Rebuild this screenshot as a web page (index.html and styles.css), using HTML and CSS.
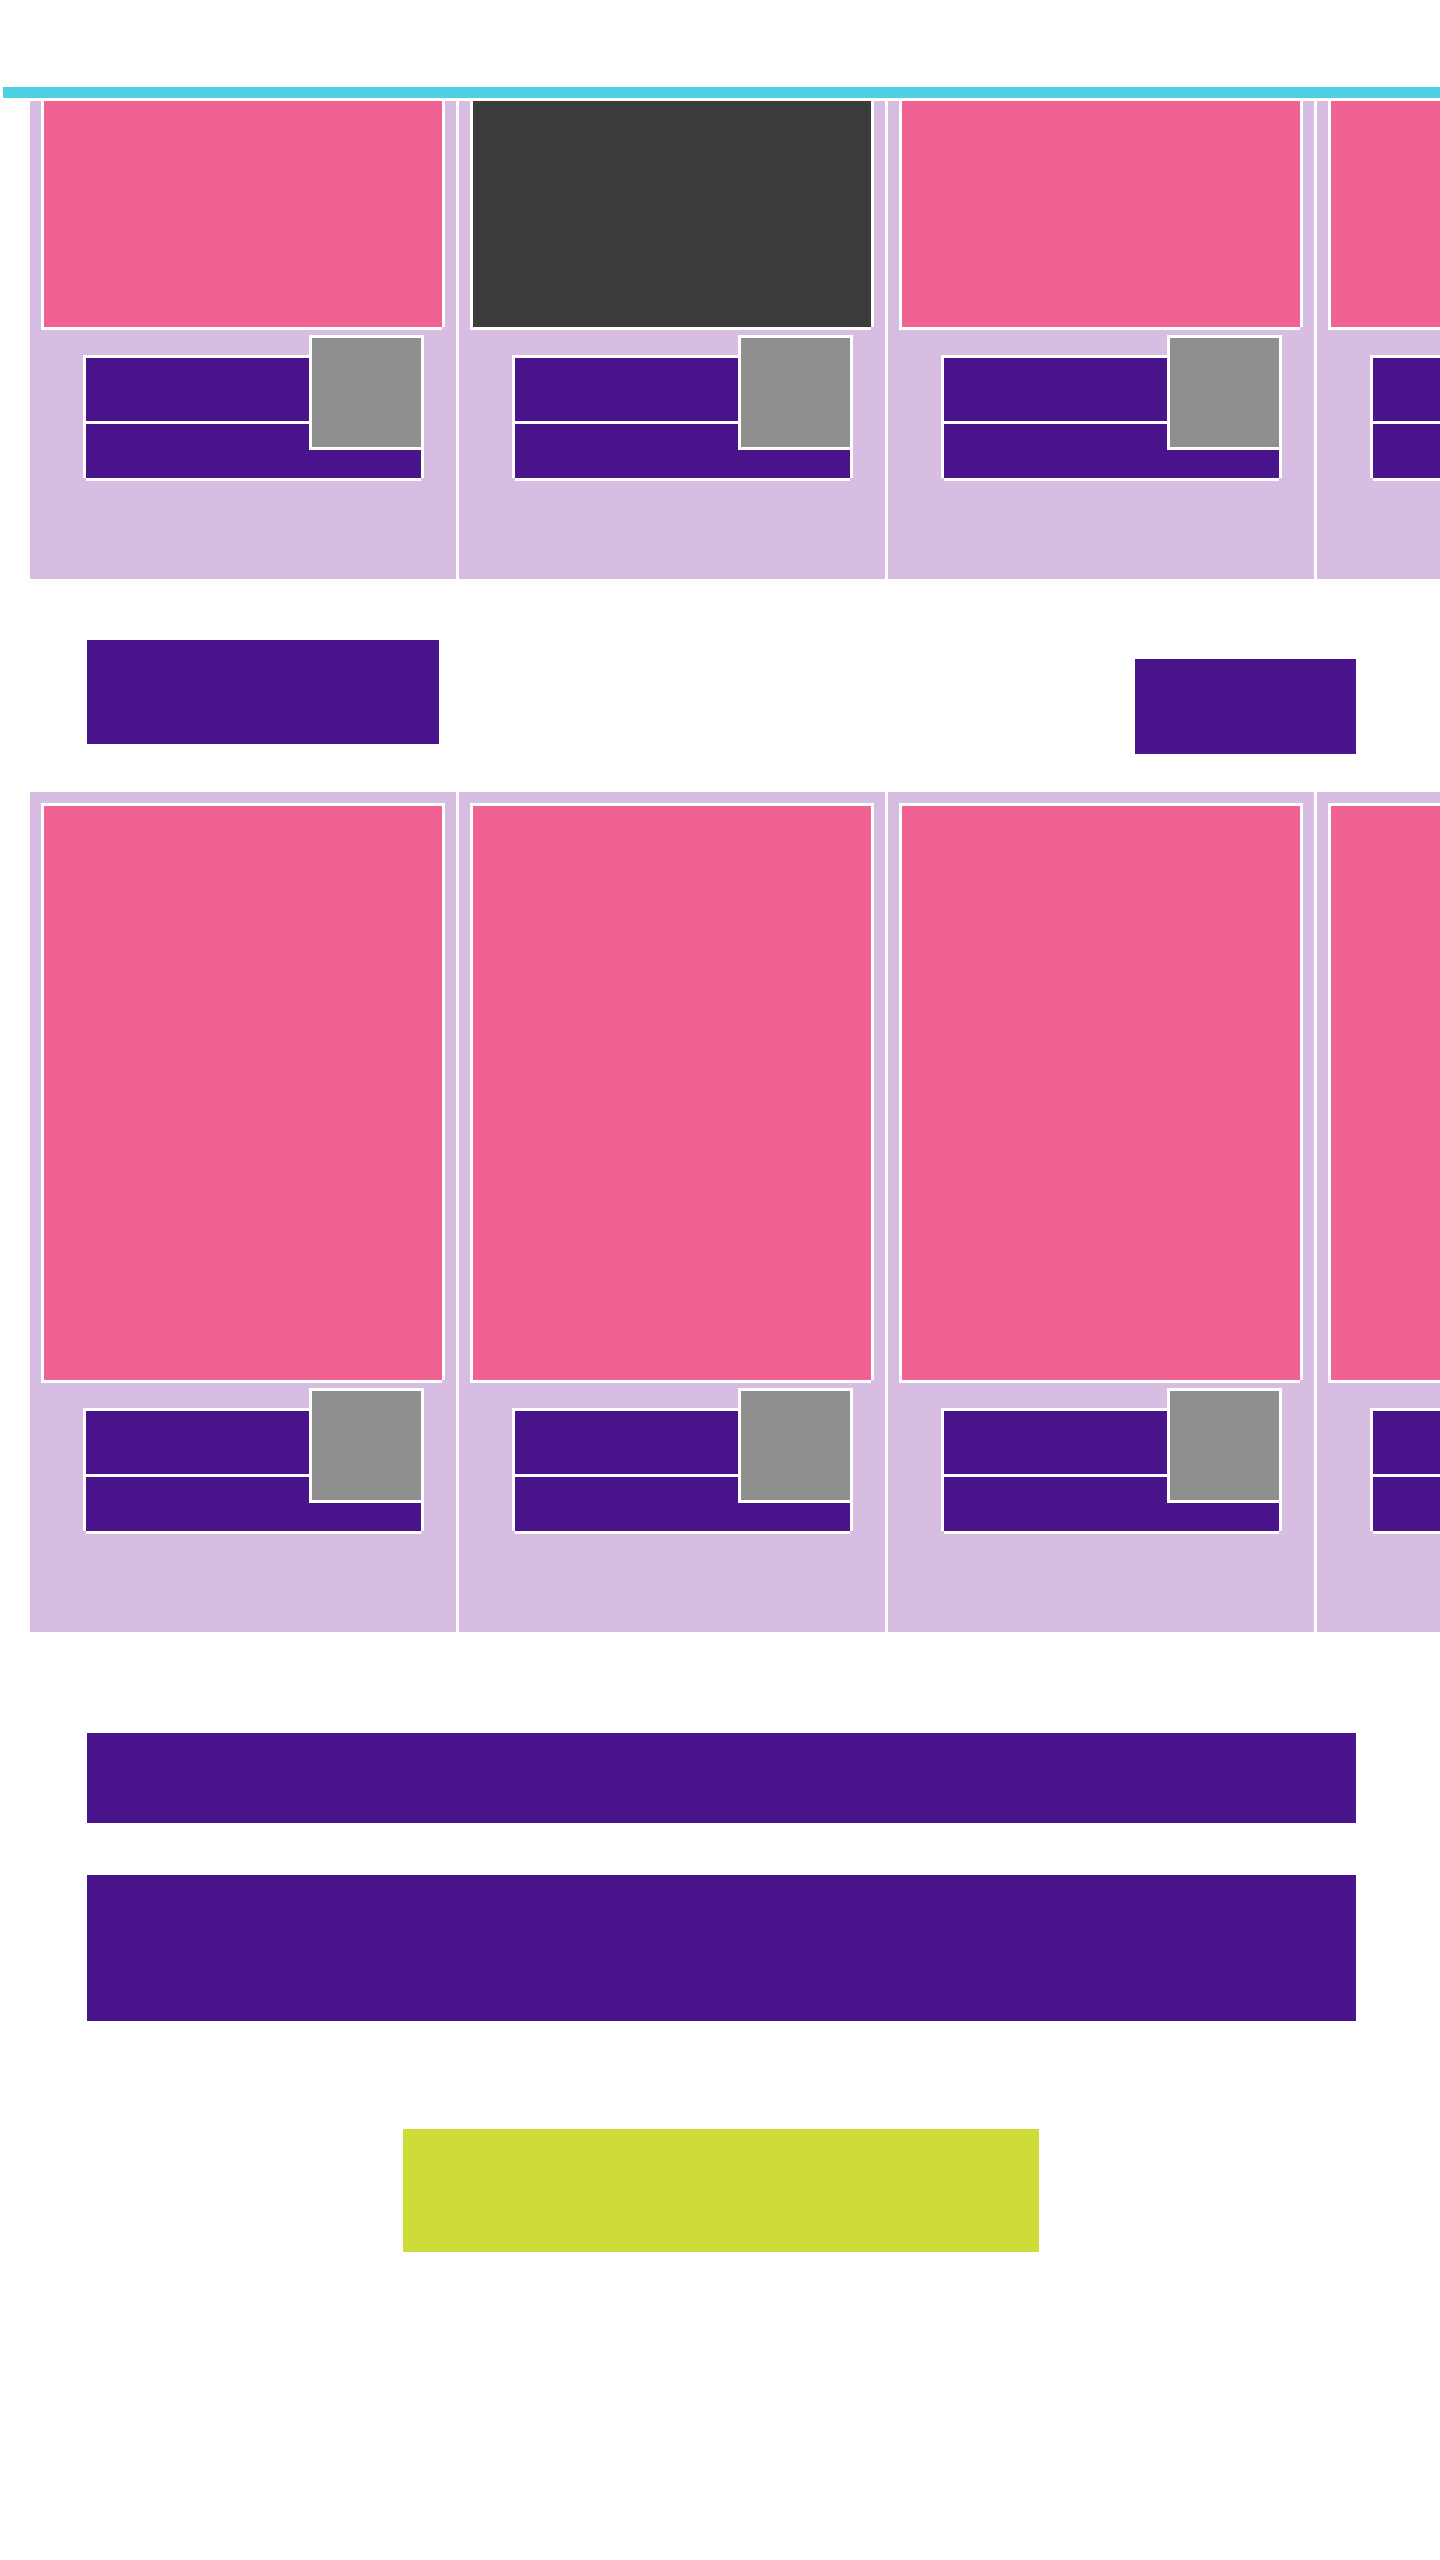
FILE: index.html
```html
<!DOCTYPE html>
<html lang="en">
<head>
  <meta charset="UTF-8">
  <meta name="viewport" content="width=device-width, initial-scale=1.0">
  <title></title>
  <link rel="stylesheet" href="styles.css">
</head>
<body>
  <div class="topbar"></div>

  <!-- first shelf: short cards -->
  <div class="shelf">
    <div class="card">
      <div class="thumb"></div>
      <div class="meta">
        <div class="meta-row meta-title"></div>
        <div class="meta-row meta-sub"></div>
        <div class="badge"></div>
      </div>
    </div>
    <div class="card">
      <div class="thumb thumb-dark"></div>
      <div class="meta">
        <div class="meta-row meta-title"></div>
        <div class="meta-row meta-sub"></div>
        <div class="badge"></div>
      </div>
    </div>
    <div class="card">
      <div class="thumb"></div>
      <div class="meta">
        <div class="meta-row meta-title"></div>
        <div class="meta-row meta-sub"></div>
        <div class="badge"></div>
      </div>
    </div>
    <div class="card">
      <div class="thumb"></div>
      <div class="meta">
        <div class="meta-row meta-title"></div>
        <div class="meta-row meta-sub"></div>
        <div class="badge"></div>
      </div>
    </div>
  </div>

  <div class="actions">
    <div class="btn btn-wide"></div>
    <div class="btn btn-small"></div>
  </div>

  <!-- second shelf: tall cards -->
  <div class="shelf shelf-large">
    <div class="card">
      <div class="thumb"></div>
      <div class="meta">
        <div class="meta-row meta-title"></div>
        <div class="meta-row meta-sub"></div>
        <div class="badge"></div>
      </div>
    </div>
    <div class="card">
      <div class="thumb"></div>
      <div class="meta">
        <div class="meta-row meta-title"></div>
        <div class="meta-row meta-sub"></div>
        <div class="badge"></div>
      </div>
    </div>
    <div class="card">
      <div class="thumb"></div>
      <div class="meta">
        <div class="meta-row meta-title"></div>
        <div class="meta-row meta-sub"></div>
        <div class="badge"></div>
      </div>
    </div>
    <div class="card">
      <div class="thumb"></div>
      <div class="meta">
        <div class="meta-row meta-title"></div>
        <div class="meta-row meta-sub"></div>
        <div class="badge"></div>
      </div>
    </div>
  </div>

  <div class="panel panel-bar"></div>
  <div class="panel panel-box"></div>

  <div class="cta"></div>
</body>
</html>
```

FILE: styles.css
```css
body {
  font-family: 'Liberation Sans', Arial, sans-serif;
  margin: 0;
  background: #fff;
}

.topbar {
  height: 11px;
  margin: 87px 0 0 3px;
  background-color: #4dd0e1;
}

.shelf {
  display: flex;
  gap: 3px;
  margin-top: 3px;
  padding-left: 30px;
  overflow: hidden;
}

.card {
  flex: 0 0 426px;
  height: 478px;
  padding: 0 14px;
  box-sizing: border-box;
  background-color: #d7bde2;
}

.thumb {
  height: 226px;
  background-color: #f06292;
  box-shadow: -3px -3px 0 #fff, 3px -3px 0 #fff, -3px 3px 0 #fff, 0 3px 0 #fff, 3px 0 0 #fff;
}

.thumb-dark {
  background-color: #3c3c3c;
}

.meta {
  position: relative;
  display: grid;
  gap: 3px;
  width: 335px;
  margin: 28px 0 0 42px;
  border-top: 3px solid #fff;
  box-shadow: -3px 0 0 #fff;
}

.meta-row {
  background-color: #4a148c;
  box-shadow: 0 3px 0 #fff, 3px 0 0 #fff;
}

.meta-title {
  height: 63px;
}

.meta-sub {
  height: 54px;
}

.badge {
  position: absolute;
  top: -20px;
  right: 0;
  width: 109px;
  height: 109px;
  background-color: #8f8f8f;
  box-shadow: 0 0 0 3px #fff;
}

.shelf-large {
  margin-top: 38px;
}

.shelf-large .card {
  height: 840px;
  padding-top: 14px;
}

.shelf-large .thumb {
  height: 574px;
}

.actions {
  display: flex;
  justify-content: space-between;
  align-items: flex-start;
  margin: 61px 84px 0 87px;
}

.btn {
  background-color: #4a148c;
}

.btn-wide {
  width: 352px;
  height: 104px;
}

.btn-small {
  width: 221px;
  height: 95px;
  margin-top: 19px;
}

.panel {
  margin: 0 84px 0 87px;
  background-color: #4a148c;
}

.panel-bar {
  margin-top: 101px;
  height: 90px;
}

.panel-box {
  margin-top: 52px;
  height: 146px;
}

.cta {
  width: 636px;
  height: 123px;
  margin: 108px 0 0 403px;
  background-color: #cddc39;
}
```
